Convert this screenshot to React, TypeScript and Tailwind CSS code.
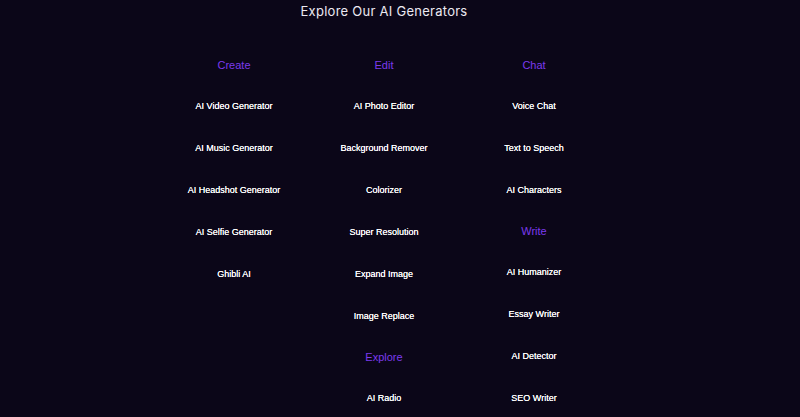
const columns: { title: string; items: string[] }[][] = [
  [{ title: "Create", items: ["AI Video Generator", "AI Music Generator", "AI Headshot Generator", "AI Selfie Generator", "Ghibli AI"] }],
  [
    { title: "Edit", items: ["AI Photo Editor", "Background Remover", "Colorizer", "Super Resolution", "Expand Image", "Image Replace"] },
    { title: "Explore", items: ["AI Radio"] },
  ],
  [
    { title: "Chat", items: ["Voice Chat", "Text to Speech", "AI Characters"] },
    { title: "Write", items: ["AI Humanizer", "Essay Writer", "AI Detector", "SEO Writer"] },
  ],
];

export default function App() {
  return (
    <div className="h-[417px] w-full overflow-hidden bg-[#0b0618] font-['Inter',sans-serif]">
      <div className="w-[768px]">
        <h2 className="pt-[1px] text-center text-[13px] leading-[21px] tracking-[0.02em] text-[#ece9f2]">
          Explore Our AI Generators
        </h2>
        <div className="mt-[23px] flex justify-center">
          {columns.map((groups, i) => (
            <div key={i} className="flex w-[150px] flex-col">
              {groups.map((g) => (
                <div key={g.title} className="flex flex-col">
                  <div className="flex h-[40px] items-center justify-center font-['Liberation_Sans',sans-serif] text-[11px] text-[#7c3aed]">
                    {g.title}
                  </div>
                  {g.items.map((it) => (
                    <div key={it} className="flex h-[42px] items-center justify-center pt-[1px] font-['Liberation_Sans',sans-serif] text-[9px] text-white [text-shadow:0_0_0.4px_#fff]">
                      {it}
                    </div>
                  ))}
                </div>
              ))}
            </div>
          ))}
        </div>
      </div>
    </div>
  );
}
